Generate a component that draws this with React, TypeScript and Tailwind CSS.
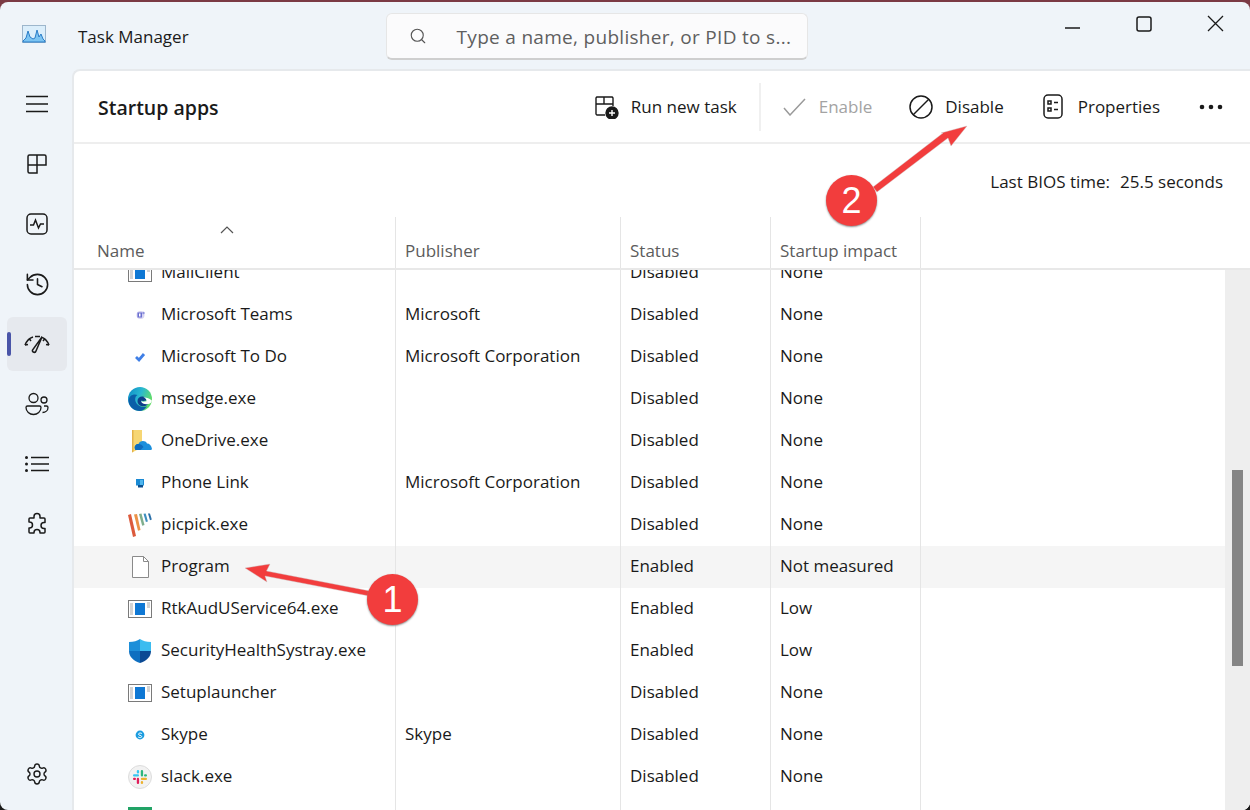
import React from "react";
import { History, Settings, Search } from "lucide-react";

const font = { fontFamily: '"Open Sans", "Noto Sans", sans-serif' };

function WinIcon() {
  return (
    <svg width="24" height="18" viewBox="0 0 24 18">
      <rect x="0.5" y="0.5" width="23" height="17" fill="#fff" stroke="#7a7a7a" />
      <rect x="7" y="3" width="10" height="12" fill="#0f78d4" />
      <path d="M2 4h3M2 6h3M2 8h3M2 10h3M2 12h3M2 14h3M19 3h3M19 5h3M19 7h3" stroke="#a8a8a8" strokeWidth="1" />
    </svg>
  );
}
function Teams() {
  return (
    <svg width="24" height="24" viewBox="0 0 24 24">
      <circle cx="12.500" cy="12" r="4" fill="#d6d3f2" />
      <rect x="9.500" y="9.500" width="4.500" height="5" fill="#6a6fd0" />
      <rect x="11" y="10.500" width="1.500" height="3" fill="#fff" />
      <circle cx="15.500" cy="10" r="1.200" fill="#8f92dc" />
    </svg>
  );
}
function Todo() {
  return (
    <svg width="24" height="24" viewBox="0 0 24 24">
      <path d="M8 12l3 3 5-6" fill="none" stroke="#3f7fe6" strokeWidth="2.800" />
    </svg>
  );
}
function Edge() {
  return (
    <svg width="24" height="24" viewBox="0 0 24 24">
      <defs>
        <linearGradient id="edge1" x1="0" y1="0" x2="1" y2="0.4">
          <stop offset="0" stopColor="#0c8bc8" />
          <stop offset="0.55" stopColor="#2ab8d0" />
          <stop offset="1" stopColor="#62dc6a" />
        </linearGradient>
      </defs>
      <circle cx="12" cy="12" r="12" fill="url(#edge1)" />
      <path d="M0.5 14C1 8 6 6.500 9.500 8 6.500 9.500 6.500 14 9 17c2.500 3 6.500 3.500 10 2.500C16.500 22.500 14 24 12 24 6 24 1 20 0.500 14z" fill="#0a5ea8" />
      <path d="M9.500 14c0-3.500 3-5 5.500-4.500 2.500.5 3.500 2.500 3 4-2 .5-4 .5-5 0 .5 2.500 4 4 7.500 3-2.500 3-6 3.500-8.500 2-2-1.500-2.500-3-2.500-4.500z" fill="#0d3f8a" />
      <path d="M13 14.200c1.500.6 3.500.6 5.500 0 .5-1.500-1-3.500-3-3.500 1.500-.5 5.500 0 8.500 3-.5 2.500-3 3.500-5.500 3.500-2.500 0-5-1-5.500-3z" fill="#fff" />
    </svg>
  );
}
function OneDrive() {
  return (
    <svg width="24" height="24" viewBox="0 0 24 24">
      <path d="M4 1h10v15H9v5l-5 2.500z" fill="#f6d674" />
      <path d="M4 1h1.500v21.500L4 23.500z" fill="#e3b24a" />
      <path d="M7 20c-1-3 1-5 3.500-5 1-3.500 7-4 8.500-.5 2.500 0 4.500 2 5 5.500-.5 1-1 1-2 1H8c-.5 0-1-.5-1-1z" fill="#1b8fdc" />
      <path d="M7 20c-1-3 1-5 3.500-5 2 0 4 1 5 3l-3 3H8c-.5 0-1-.5-1-1z" fill="#0f6cbd" />
    </svg>
  );
}
function Phone() {
  return (
    <svg width="24" height="24" viewBox="0 0 24 24">
      <rect x="8" y="8" width="8" height="6.500" fill="#1a8ad4" />
      <rect x="10" y="14" width="5" height="2.500" fill="#0b4f8f" />
      <rect x="12" y="9" width="3" height="5" fill="#4fb6ee" />
    </svg>
  );
}
function PicPick() {
  return (
    <svg width="24" height="24" viewBox="0 0 24 24">
      <path d="M0 2l3-1 5 22-3 1z" fill="#dc5a3c" />
      <path d="M6 1.500l3-.5 3.500 16-2.500.8z" fill="#eb9247" />
      <path d="M11 1l2.500-.5 3 11.500-2.300.7z" fill="#7fae8d" />
      <path d="M15.500 .8l2.200-.3 2.200 8-2 .6z" fill="#3f8fbe" />
      <path d="M20 .6l2-.2 1.800 6.200-1.800.6z" fill="#2a6fa8" />
    </svg>
  );
}
function FileIcon() {
  return (
    <svg width="17" height="22" viewBox="0 0 17 22" fill="none" stroke="#8a8a8a">
      <path d="M0.500 0.500h11l5 5v16h-16z" fill="#fff" />
      <path d="M11.500 0.500v5h5" />
    </svg>
  );
}
function Shield() {
  return (
    <svg width="24" height="24" viewBox="0 0 24 24">
      <path d="M12 0c3 2 6 3 11 3v9H12z" fill="#3bbcf0" />
      <path d="M12 0c-3 2-6 3-11 3v9h11z" fill="#1d8fd9" />
      <path d="M1 12h11v12C6 22 1 18 1 12z" fill="#0e6fc0" />
      <path d="M23 12H12v12c6-2 11-6 11-12z" fill="#0b4a94" />
    </svg>
  );
}
function Skype() {
  return (
    <svg width="24" height="24" viewBox="0 0 24 24">
      <circle cx="12" cy="12" r="4.400" fill="#1a9ce0" />
      <path d="M13.800 10.500c-1-.8-3.400-.6-3.300.8.100 1.400 3.200.8 3.200 2.300 0 1.200-2.300 1.300-3.500.4" fill="none" stroke="#fff" strokeWidth="1" />
    </svg>
  );
}
function Slack() {
  return (
    <svg width="24" height="24" viewBox="0 0 24 24">
      <circle cx="12" cy="12" r="11.500" fill="#f2f2f2" stroke="#dcdcdc" />
      <rect x="5" y="9.200" width="6" height="2.300" rx="1.100" fill="#36c5f0" />
      <rect x="8.800" y="5" width="2.300" height="3.500" rx="1.100" fill="#36c5f0" />
      <rect x="12.800" y="5" width="2.300" height="6.500" rx="1.100" fill="#2eb67d" />
      <rect x="16" y="9.200" width="3" height="2.300" rx="1.100" fill="#2eb67d" />
      <rect x="12.800" y="12.800" width="6.200" height="2.300" rx="1.100" fill="#ecb22e" />
      <rect x="12.800" y="16" width="2.300" height="3" rx="1.100" fill="#ecb22e" />
      <rect x="8.800" y="12.800" width="2.300" height="6.200" rx="1.100" fill="#e01e5a" />
      <rect x="5" y="12.800" width="3" height="2.300" rx="1.100" fill="#e01e5a" />
    </svg>
  );
}
function GreenIcon() {
  return <div className="w-6 h-6 bg-[#21a366]" />;
}

type R = { icon: React.ReactNode; name: string; pub?: string; status: string; impact: string; hl?: boolean };
const rows: R[] = [
  { icon: <WinIcon />, name: "MailClient", status: "Disabled", impact: "None" },
  { icon: <Teams />, name: "Microsoft Teams", pub: "Microsoft", status: "Disabled", impact: "None" },
  { icon: <Todo />, name: "Microsoft To Do", pub: "Microsoft Corporation", status: "Disabled", impact: "None" },
  { icon: <Edge />, name: "msedge.exe", status: "Disabled", impact: "None" },
  { icon: <OneDrive />, name: "OneDrive.exe", status: "Disabled", impact: "None" },
  { icon: <Phone />, name: "Phone Link", pub: "Microsoft Corporation", status: "Disabled", impact: "None" },
  { icon: <PicPick />, name: "picpick.exe", status: "Disabled", impact: "None" },
  { icon: <FileIcon />, name: "Program", status: "Enabled", impact: "Not measured", hl: true },
  { icon: <WinIcon />, name: "RtkAudUService64.exe", status: "Enabled", impact: "Low" },
  { icon: <Shield />, name: "SecurityHealthSystray.exe", status: "Enabled", impact: "Low" },
  { icon: <WinIcon />, name: "Setuplauncher", status: "Disabled", impact: "None" },
  { icon: <Skype />, name: "Skype", pub: "Skype", status: "Disabled", impact: "None" },
  { icon: <Slack />, name: "slack.exe", status: "Disabled", impact: "None" },
  { icon: <GreenIcon />, name: "", status: "", impact: "" },
];

function NavIcon({ children, active }: { children: React.ReactNode; active?: boolean }) {
  return (
    <div className={"relative h-[54px] w-[60px] flex items-center justify-center rounded-md " + (active ? "bg-[#e6e9ee]" : "")}>
      {active && <div className="absolute left-0 top-[15px] h-6 w-1 rounded-full bg-[#4a55a8]" />}
      {children}
    </div>
  );
}

function Row({ r }: { r: R }) {
  return (
    <div className={"grid grid-cols-[322px_225px_150px_150px_1fr] h-[42px] shrink-0 text-[17px] text-[#1a1a1a] " + (r.hl ? "bg-[#f5f5f5]" : "")}>
      <div className="border-r border-[#e5e5e5] flex items-center pl-[54px] gap-[9px]">
        <div className="w-6 h-6 flex items-center justify-center shrink-0">{r.icon}</div>
        <span className="pb-[2px]">{r.name}</span>
      </div>
      <div className="border-r border-[#e5e5e5] flex items-center pl-[9px] pb-[2px]">{r.pub}</div>
      <div className="border-r border-[#e5e5e5] flex items-center pl-[9px] pb-[2px]">{r.status}</div>
      <div className="border-r border-[#e5e5e5] flex items-center pl-[9px] pb-[2px]">{r.impact}</div>
      <div />
    </div>
  );
}

export default function App() {
  return (
    <div style={font} className="relative w-[1250px] h-[810px] overflow-hidden bg-[linear-gradient(#7b3a44_0_50%,#1a1a1a_50%)] pt-[2px]">
      <div className="w-full h-[808px] rounded-lg overflow-hidden bg-[#eff4f9] flex flex-col">
        {/* title bar */}
        <div className="h-[67px] shrink-0 flex items-start relative">
          <div className="ml-[22px] mt-[23px] w-6 h-[18px]">
            <svg width="24" height="18" viewBox="0 0 24 18">
              <rect x="0.5" y="0.5" width="23" height="17" fill="#dbeefb" stroke="#9db6cc" />
              <path d="M1 16l3-3 2-7 2 6 3 2 2-1 2-8 2 7 2-3 2 5 2 2v1H1z" fill="#7cc4f2" stroke="#2a7cc7" strokeWidth="1" />
            </svg>
          </div>
          <div className="ml-[32px] mt-[21px] text-[17px] leading-[28px] text-[#1a1a1a]">Task Manager</div>
          <div className="ml-[197px] mt-[11px] w-[422px] h-[47px] bg-[#fbfbfc] border border-[#e6e6e6] border-b-2 border-b-[#cfcfcf] rounded-md flex items-center pl-[22px] gap-[30px] text-[#5f5f5f] text-[19px]">
            <Search size={18} strokeWidth={1.5} className="text-[#555]" />
            <span className="tracking-[0.3px] pt-[2px]">Type a name, publisher, or PID to s...</span>
          </div>
          <div className="ml-auto flex items-center mt-[13px] mr-[26px] gap-[55px]">
            <svg width="17" height="17" viewBox="0 0 17 17"><path d="M1 13h15" stroke="#1a1a1a" strokeWidth="1.3" /></svg>
            <svg width="16" height="16" viewBox="0 0 16 16"><rect x="1" y="1" width="14" height="14" rx="2" fill="none" stroke="#1a1a1a" strokeWidth="1.5" /></svg>
            <svg width="17" height="17" viewBox="0 0 17 17"><path d="M1 1l15 15M16 1L1 16" stroke="#1a1a1a" strokeWidth="1.3" /></svg>
          </div>
        </div>

        <div className="flex flex-1 min-h-0">
          {/* sidebar */}
          <div className="w-[72px] shrink-0 flex flex-col pl-[7px] pt-[8px] pb-[9px] gap-[6px] text-[#1a1a1a]">
            <NavIcon>
              <svg width="24" height="18" viewBox="0 0 24 18"><path d="M1 1.500h22M1 9h22M1 16.500h22" stroke="#1a1a1a" strokeWidth="1.5" /></svg>
            </NavIcon>
            <NavIcon>
              <svg width="20" height="20" viewBox="0 0 20 20" fill="none" stroke="#1a1a1a" strokeWidth="1.5">
                <path d="M1 11V2.500A1.500 1.500 0 0 1 2.500 1h15A1.500 1.500 0 0 1 19 2.500V11H10V19H2.500A1.500 1.500 0 0 1 1 17.500zM1 11h9M10 1v10" />
              </svg>
            </NavIcon>
            <NavIcon>
              <svg width="22" height="22" viewBox="0 0 22 22" fill="none" stroke="#1a1a1a" strokeWidth="1.5">
                <rect x="1" y="1" width="20" height="20" rx="4" />
                <path d="M4 12h3.500l2-5 3 8 2-4H18" />
              </svg>
            </NavIcon>
            <NavIcon><History size={27} strokeWidth={1.4} /></NavIcon>
            <NavIcon active>
              <svg width="26" height="22" viewBox="0 0 26 22" fill="none" stroke="#1a1a1a" strokeWidth="1.5">
                <path d="M1 12C3 7 6 5 9 4M17 4c3 1 6 3 8 8" />
                <path d="M1 12l3-.5M5 5.500l2 2.500M11 3.500h5M25 12l-3-.5M21 5.500l-2 2.500" />
                <path d="M18 4l-6 14a1.800 1.800 0 0 1-3.500-1z" />
              </svg>
            </NavIcon>
            <NavIcon>
              <svg width="24" height="24" viewBox="0 0 24 24" fill="none" stroke="#1a1a1a" strokeWidth="1.300">
                <circle cx="8.500" cy="6" r="4.500" />
                <path d="M1 15.500a1.500 1.500 0 0 1 1.500-1.500h12a1.500 1.500 0 0 1 1.500 1.500c0 4-3.500 7-7.500 7s-7.500-3-7.500-7z" />
                <circle cx="19" cy="8" r="3" />
                <path d="M19 14h2.500A1.500 1.500 0 0 1 23 15.500c0 3-2.500 5-5.500 5" />
              </svg>
            </NavIcon>
            <NavIcon>
              <svg width="24" height="16" viewBox="0 0 24 16" fill="none" stroke="#1a1a1a" strokeWidth="1.500">
                <circle cx="1.500" cy="1.500" r="1.500" fill="#1a1a1a" stroke="none" />
                <circle cx="1.500" cy="8" r="1.500" fill="#1a1a1a" stroke="none" />
                <circle cx="1.500" cy="14.500" r="1.500" fill="#1a1a1a" stroke="none" />
                <path d="M6 1.500h18M6 8h18M6 14.500h18" />
              </svg>
            </NavIcon>
            <NavIcon>
              <svg width="24" height="24" viewBox="0 0 24 24" fill="none" stroke="#1a1a1a" strokeWidth="1.500" strokeLinejoin="round">
                <path d="M9 4.500a3 3 0 0 1 6 0V6h4a1 1 0 0 1 1 1v3.500h-1a3 3 0 0 0 0 6h1V20a1 1 0 0 1-1 1h-4v-.5a3 3 0 0 0-6 0V21H5a1 1 0 0 1-1-1v-4h.5a3 3 0 0 0 0-6H4V7a1 1 0 0 1 1-1h4z" />
              </svg>
            </NavIcon>
            <div className="mt-auto"><NavIcon><Settings size={24} strokeWidth={1.4} /></NavIcon></div>
          </div>

          {/* main */}
          <div className="flex-1 min-w-0 bg-white rounded-tl-lg border-l-2 border-t-2 border-[#e6e9ec] flex flex-col">
            {/* header */}
            <div className="h-[73px] shrink-0 border-b-2 border-[#eeeeee] flex items-center pl-[24px] pr-[27px]">
              <h1 className="text-[19.500px] font-semibold text-[#1a1a1a] pt-[2px]">Startup apps</h1>
              <div className="ml-auto flex items-center text-[17px] text-[#1a1a1a]">
                <svg width="25" height="24" viewBox="0 0 25 24" fill="none" stroke="#1a1a1a" strokeWidth="1.400" className="mr-[12px]">
                  <path d="M11 20H3a2 2 0 0 1-1-1V3a2 2 0 0 1 1-1h15a2 2 0 0 1 1 1v8M2 9h17M10 2v7" />
                  <circle cx="18" cy="18" r="6" fill="#1a1a1a" />
                  <path d="M18 15v6M15 18h6" stroke="#fff" />
                </svg>
                <span>Run new task</span>
                <div className="w-[2px] h-12 bg-[#f0f0f0] ml-[22px] mr-[22px]" />
                <svg width="23" height="18" viewBox="0 0 23 18" fill="none" stroke="#9a9a9a" strokeWidth="1.500" className="mr-[13px]">
                  <path d="M1 10l6 7L22 1" />
                </svg>
                <span className="text-[#a3a3a3] mr-[37px]">Enable</span>
                <svg width="24" height="24" viewBox="0 0 24 24" fill="none" stroke="#1a1a1a" strokeWidth="1.500" className="mr-[12px]">
                  <circle cx="12" cy="12" r="11" />
                  <path d="M4 20L20 4" />
                </svg>
                <span className="mr-[39px]">Disable</span>
                <svg width="20" height="25" viewBox="0 0 20 25" fill="none" stroke="#1a1a1a" strokeWidth="1.500" className="mr-[15px]">
                  <rect x="1" y="1" width="18" height="23" rx="4" />
                  <rect x="5" y="7" width="3" height="3" />
                  <rect x="5" y="14" width="3" height="3" />
                  <path d="M11 8.500h4M11 15.500h4" />
                </svg>
                <span className="mr-[39px]">Properties</span>
                <svg width="24" height="6" viewBox="0 0 24 6"><circle cx="3" cy="3" r="2.300" fill="#1a1a1a" /><circle cx="12" cy="3" r="2.300" fill="#1a1a1a" /><circle cx="21" cy="3" r="2.300" fill="#1a1a1a" /></svg>
              </div>
            </div>
            {/* bios */}
            <div className="h-[73px] shrink-0 flex justify-end items-center pr-[27px] pt-[2px] text-[17px] text-[#1a1a1a]">
              <span>Last BIOS time:</span>
              <span className="ml-[10px]">25.5 seconds</span>
            </div>
            {/* table head */}
            <div className="h-[53px] shrink-0 border-b-2 border-[#e8e8e8] grid grid-cols-[322px_225px_150px_150px_1fr] text-[17px] text-[#5c5c5c]">
              <div className="border-r border-[#e5e5e5] pl-[23px] relative flex items-end pb-[5px]">
                <svg width="14" height="8" viewBox="0 0 14 8" fill="none" stroke="#555" strokeWidth="1.200" className="absolute left-[146px] top-[9px]"><path d="M1 7l6-6 6 6" /></svg>
                Name
              </div>
              <div className="border-r border-[#e5e5e5] pl-[9px] flex items-end pb-[5px]">Publisher</div>
              <div className="border-r border-[#e5e5e5] pl-[9px] flex items-end pb-[5px]">Status</div>
              <div className="border-r border-[#e5e5e5] pl-[9px] flex items-end pb-[5px]">Startup impact</div>
              <div />
            </div>
            {/* body */}
            <div className="flex-1 min-h-0 flex overflow-hidden">
              <div className="flex-1 min-w-0 overflow-hidden">
                <div className="-mt-[18px] flex flex-col">
                  {rows.map((r, i) => <Row key={i} r={r} />)}
                </div>
              </div>
              <div className="w-[25px] shrink-0 bg-[#eeeeee] pl-[7px] pt-[200px]">
                <div className="w-[11px] h-[196px] bg-[#858585]" />
              </div>
            </div>
          </div>
        </div>
      </div>

      {/* annotations */}
      <svg className="absolute inset-0 pointer-events-none" width="1250" height="810" viewBox="0 0 1250 810">
        <path d="M245 568L270 564 266.500 571 370 591 369 596 265 576 267 582z" fill="#f23d3d" stroke="#c9c9c9" strokeWidth="0.4" />
        <path d="M967 126L951 146 948 138 877 192 873 187 943 133 941 133z" fill="#f23d3d" stroke="#c9c9c9" strokeWidth="0.4" />
      </svg>
      <div className="absolute left-[367px] top-[574px] w-[51px] h-[51px] rounded-full bg-[#f23d3d] flex items-center justify-center text-white text-[36px] font-normal shadow-[0_1px_2px_#8a8a8a] [font-family:'Liberation_Sans',sans-serif]">1</div>
      <div className="absolute left-[826px] top-[175px] w-[51px] h-[51px] rounded-full bg-[#f23d3d] flex items-center justify-center text-white text-[36px] font-normal shadow-[0_1px_2px_#8a8a8a] [font-family:'Liberation_Sans',sans-serif]">2</div>
    </div>
  );
}
